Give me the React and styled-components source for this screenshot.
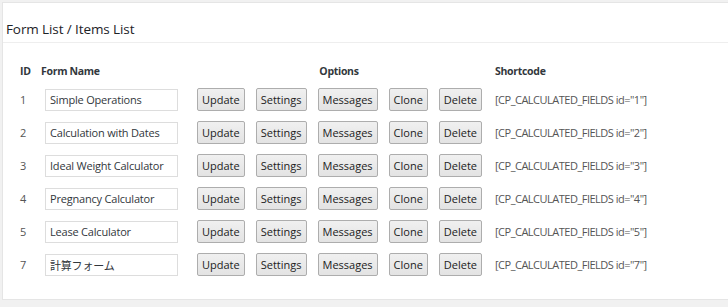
import React from "react";
import styled, { createGlobalStyle } from "styled-components";

const GlobalStyle = createGlobalStyle`
  html, body {
    margin: 0;
    padding: 0;
    background: #f1f1f1;
  }
  body {
    font-family: "Open Sans", "Noto Sans CJK JP", sans-serif;
    color: #444;
  }
`;

const Page = styled.div`
  padding: 2px 0 4px 2px;
`;

const Panel = styled.section`
  background: #fff;
  border: 1px solid #e5e5e5;
  border-right: none;
  height: 298px;
  box-sizing: border-box;
`;

const Title = styled.h3`
  margin: 0;
  padding: 17px 3px 3px;
  font-size: 13.5px;
  letter-spacing: -0.1px;
  line-height: 19px;
  font-weight: 400;
  color: #1d2327;
  border-bottom: 1px solid #eee;
`;

const Table = styled.div`
  padding: 20px 0 0 17px;
  display: flex;
  flex-direction: column;
  gap: 10px;
`;

const Row = styled.div`
  display: grid;
  grid-template-columns: 21px 156px 284px 1fr;
  align-items: center;
  height: ${({ $head }) => ($head ? "16px" : "23px")};
  margin-bottom: ${({ $head }) => ($head ? "-1px" : "0")};
  font-size: 11px;
`;

const HeadCell = styled.div`
  font-weight: 700;
  font-size: 10.5px;
  letter-spacing: -0.3px;
  color: #32373c;
  text-align: ${({ $center }) => ($center ? "center" : "left")};
  padding-left: ${({ $pad }) => $pad || 0};
`;

const Id = styled.div`
  color: #555;
`;

const NameInput = styled.input`
  box-sizing: border-box;
  margin-left: 4px;
  width: 133px;
  height: 22px;
  padding: 0 4px;
  border: 1px solid #ddd;
  font-family: "Open Sans", "Noto Sans CJK JP", sans-serif;
  font-size: 11px;
  letter-spacing: -0.2px;
  color: #32373c;
  background: #fff;
  outline: none;
`;

const Buttons = styled.div`
  display: flex;
  gap: 11px;
`;

const Button = styled.button`
  box-sizing: border-box;
  height: 23px;
  padding: 0 4px;
  border: 1px solid #adadad;
  border-radius: 2px;
  background: linear-gradient(#f0f0f0, #e3e3e3);
  font-family: "Open Sans", sans-serif;
  font-size: 11px;
  color: #222;
  cursor: pointer;
`;

const Shortcode = styled.div`
  padding-left: 14px;
  color: #555;
  letter-spacing: -0.5px;
  white-space: nowrap;
`;

const forms = [
  { id: 1, name: "Simple Operations" },
  { id: 2, name: "Calculation with Dates" },
  { id: 3, name: "Ideal Weight Calculator" },
  { id: 4, name: "Pregnancy Calculator" },
  { id: 5, name: "Lease Calculator" },
  { id: 7, name: "計算フォーム" },
];

const actions = ["Update", "Settings", "Messages", "Clone", "Delete"];

export default function App() {
  return (
    <Page>
      <GlobalStyle />
      <Panel>
        <Title>Form List / Items List</Title>
        <Table>
          <Row $head>
            <HeadCell>ID</HeadCell>
            <HeadCell>Form Name</HeadCell>
            <HeadCell $center>Options</HeadCell>
            <HeadCell $pad="14px">Shortcode</HeadCell>
          </Row>
          {forms.map((f) => (
            <Row key={f.id}>
              <Id>{f.id}</Id>
              <div>
                <NameInput defaultValue={f.name} />
              </div>
              <Buttons>
                {actions.map((a) => (
                  <Button key={a}>{a}</Button>
                ))}
              </Buttons>
              <Shortcode>[CP_CALCULATED_FIELDS id="{f.id}"]</Shortcode>
            </Row>
          ))}
        </Table>
      </Panel>
    </Page>
  );
}
